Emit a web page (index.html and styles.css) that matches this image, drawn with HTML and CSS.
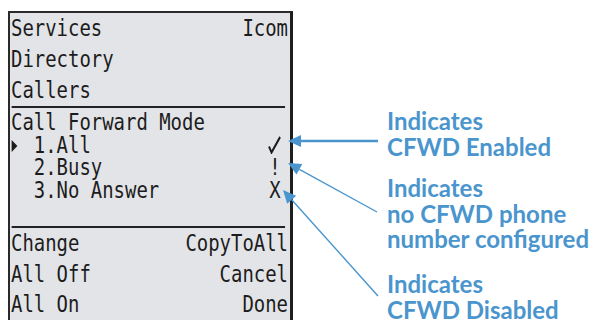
FILE: index.html
```html
<!DOCTYPE html>
<html>
<head>
<meta charset="utf-8">
<link rel="stylesheet" href="styles.css">
</head>
<body>
<div class="page">
  <div class="screen">
    <div class="lcd">
      <div class="sec menu">
        <div class="row"><span>Services</span><span>Icom</span></div>
        <div class="row"><span>Directory</span></div>
        <div class="row"><span>Callers</span></div>
      </div>
      <div class="rule"></div>
      <div class="sec mode">
        <div class="row"><span>Call Forward Mode</span></div>
        <div class="row"><span class="item"><span class="cursor"><span class="tri"></span></span>1.All</span><span class="mark"><svg class="check" width="16" height="18" viewBox="0 0 16 18"><path d="M1.5 10.5 L4.6 16.5 L15 1" fill="none" stroke="#1c1c1c" stroke-width="2.3" stroke-linejoin="miter"/></svg></span></div>
        <div class="row"><span class="item"><span class="cursor"></span>2.Busy</span><span class="mark">!</span></div>
        <div class="row"><span class="item"><span class="cursor"></span>3.No Answer</span><span class="mark">X</span></div>
      </div>
      <div class="rule rule2"></div>
      <div class="sec keys">
        <div class="row"><span>Change</span><span>CopyToAll</span></div>
        <div class="row"><span>All Off</span><span>Cancel</span></div>
        <div class="row"><span>All On</span><span>Done</span></div>
      </div>
    </div>
  </div>
  <div class="notes">
    <p class="note">Indicates<br>CFWD Enabled</p>
    <p class="note n2">Indicates<br>no CFWD phone<br>number configured</p>
    <p class="note n3">Indicates<br>CFWD Disabled</p>
  </div>
  <svg class="arrows" width="594" height="320" viewBox="0 0 594 320">
    <g fill="#4a95cd" stroke="#4a95cd">
      <line x1="378" y1="141" x2="298" y2="141" stroke-width="2.4"/>
      <polygon points="288,141 301,135 301,147" stroke="none"/>
      <line x1="377" y1="212" x2="299.4" y2="169.3" stroke-width="1.4"/>
      <polygon points="288,163 302.3,164 296.5,174.6" stroke="none"/>
      <line x1="378" y1="296" x2="291.7" y2="199.7" stroke-width="1.4"/>
      <polygon points="283,190 296.2,195.7 287.2,203.7" stroke="none"/>
    </g>
  </svg>
</div>
</body>
</html>
```

FILE: styles.css
```css
html, body {
  margin: 0;
  padding: 0;
  background: #ffffff;
}

.page {
  position: relative;
  width: 594px;
  height: 320px;
  overflow: hidden;
  display: flex;
  align-items: flex-start;
  padding: 11px 0 0 8px;
  box-sizing: border-box;
}

.screen {
  width: 280px;
  flex: none;
  background: #e3e4e8;
  border-top: 2px solid #2a2a2a;
  border-left: 2px solid #2a2a2a;
  border-right: 3px solid #1e1e1e;
  overflow: hidden;
}

.lcd {
  width: 340px;
  transform: scaleX(0.8235);
  transform-origin: 0 0;
  font-family: "DejaVu Sans Mono", "Liberation Mono", monospace;
  font-size: 23px;
  color: #1c1c1c;
  padding: 0 2.4px 0 1.2px;
  box-sizing: border-box;
}

.row {
  display: flex;
  justify-content: space-between;
  white-space: pre;
}

.menu .row {
  line-height: 31px;
}

.mode {
  padding-top: 3px;
}

.mode .row {
  line-height: 22.5px;
}

.keys .row {
  line-height: 30.5px;
}

.rule {
  height: 2px;
  background: #222;
  margin: 0 3.6px 0 1.2px;
}

.rule2 {
  margin-top: 25px;
}

.cursor {
  display: inline-block;
  width: 2ch;
}

.tri {
  display: inline-block;
  width: 0;
  height: 0;
  border-left: 7px solid #1c1c1c;
  border-top: 6.5px solid transparent;
  border-bottom: 6.5px solid transparent;
  margin-left: 1px;
  margin-bottom: 1px;
}

.mark {
  display: inline-block;
  width: 1ch;
  text-align: center;
  padding-right: 9px;
}

.check {
  display: inline-block;
  vertical-align: -1px;
  margin-left: -2px;
}

.notes {
  margin-left: 94px;
  padding-top: 97px;
  font-family: Lato, "Open Sans", sans-serif;
  font-weight: 700;
  font-size: 24px;
  line-height: 25.5px;
  color: #4a95cd;
  white-space: nowrap;
}

.note {
  margin: 0;
}

.n2 {
  margin-top: 16px;
}

.n3 {
  margin-top: 19.5px;
}

.arrows {
  position: absolute;
  left: 0;
  top: 0;
  pointer-events: none;
}
```
